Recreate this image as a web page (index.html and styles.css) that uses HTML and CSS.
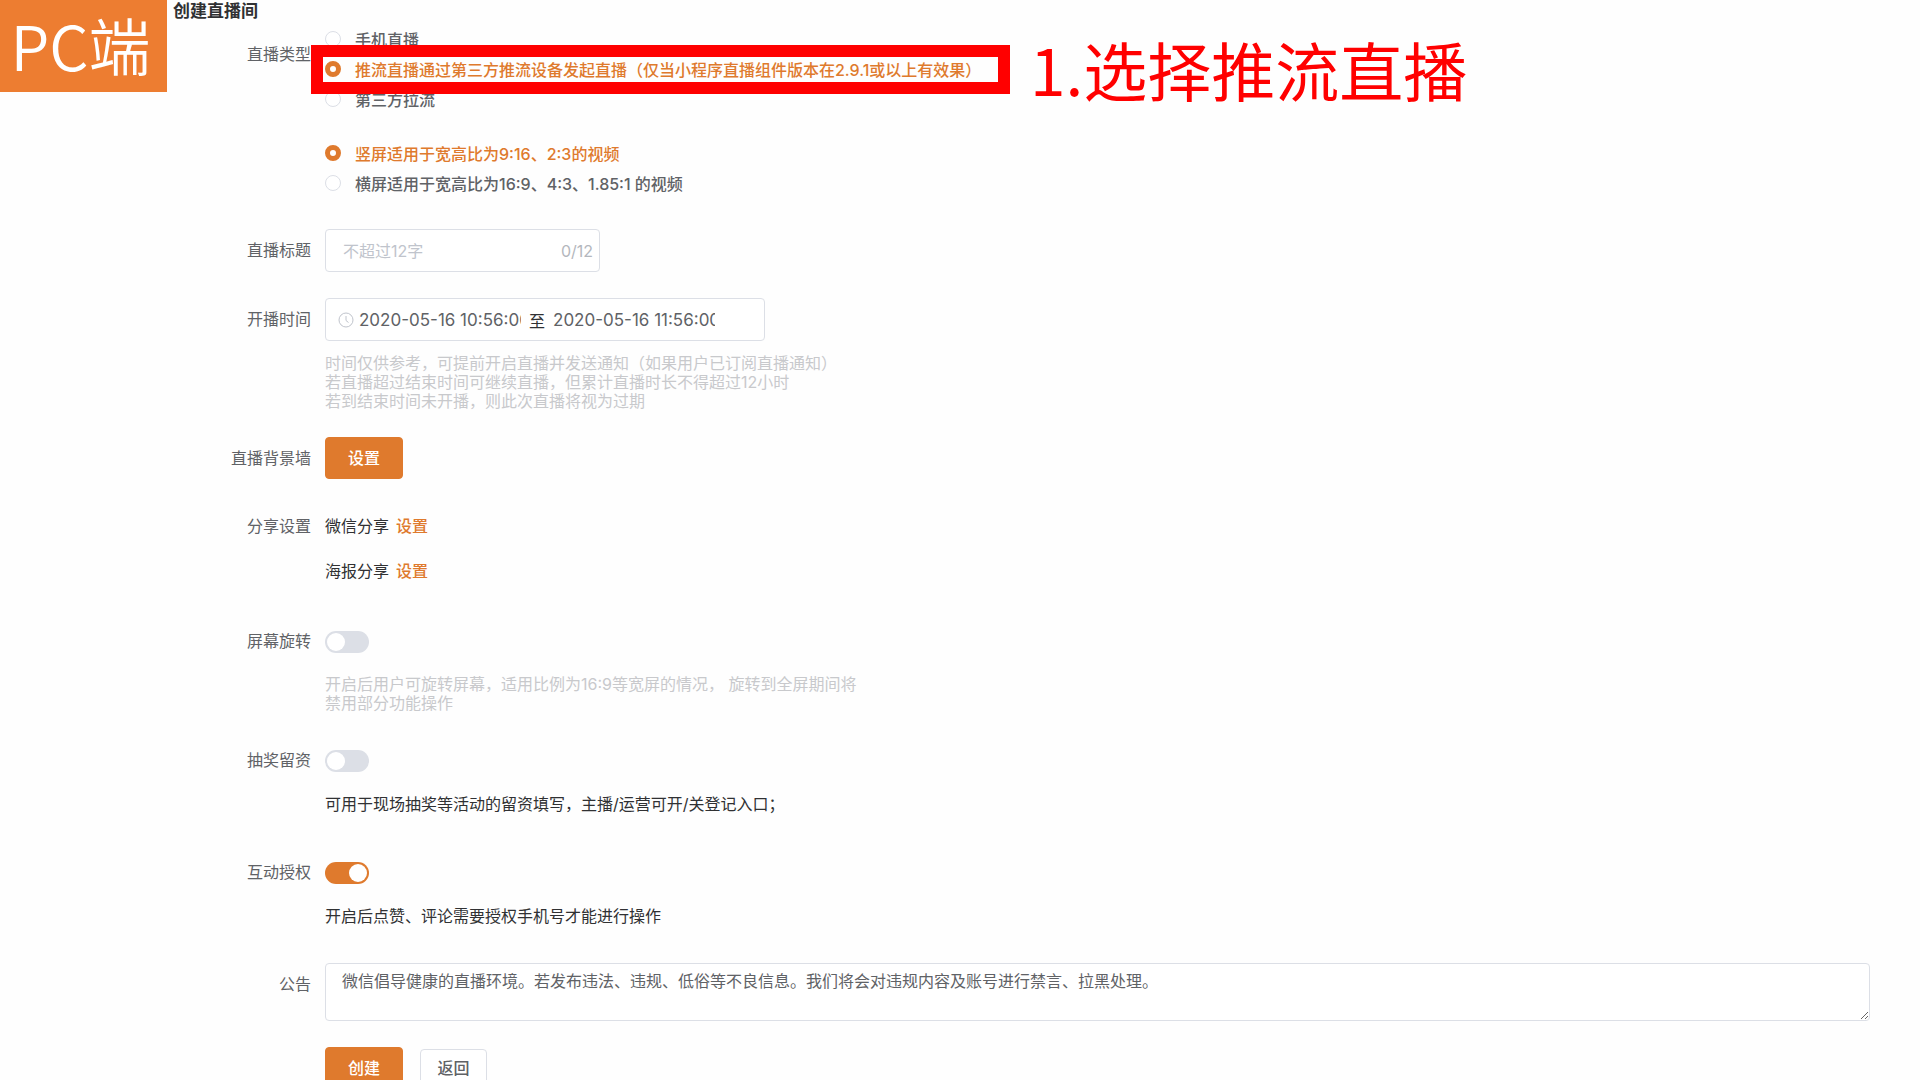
FILE: index.html
```
<!DOCTYPE html>
<html lang="zh-CN">

<head>
	<meta charset="UTF-8" />
	<meta name="viewport" content="width=device-width, initial-scale=1.0" />
	<title>创建直播间</title>
	<link rel="stylesheet" href="styles.css">
</head>

<body>
	<div class="badge">PC端</div>
	<div class="note">1.选择推流直播</div>

	<h1 class="page-title">创建直播间</h1>

	<form class="form">
		<div class="item item-type">
			<span class="item-label" id="type-label">直播类型</span>
			<div class="item-content">
				<div class="radio-group" role="radiogroup" aria-labelledby="type-label">
					<label class="radio"><input type="radio" name="type">手机直播</label>
					<div class="marked">
						<label class="radio"><input type="radio" name="type" checked>推流直播通过第三方推流设备发起直播（仅当小程序直播组件版本在2.9.1或以上有效果）</label>
						<div class="mark-box"></div>
					</div>
					<label class="radio"><input type="radio" name="type">第三方拉流</label>
				</div>
				<div class="radio-group" role="radiogroup" aria-labelledby="type-label">
					<label class="radio"><input type="radio" name="screen" checked>竖屏适用于宽高比为9:16、2:3的视频</label>
					<label class="radio"><input type="radio" name="screen">横屏适用于宽高比为16:9、4:3、1.85:1 的视频</label>
				</div>
			</div>
		</div>

		<div class="item">
			<label class="item-label" for="title">直播标题</label>
			<div class="item-content">
				<div class="box title-box">
					<input type="text" id="title" class="plain-input" placeholder="不超过12字" maxlength="12">
					<span class="count">0/12</span>
				</div>
			</div>
		</div>

		<div class="item">
			<label class="item-label" for="start">开播时间</label>
			<div class="item-content">
				<div class="box time-box">
					<svg class="clock" viewBox="0 0 16 16" fill="none" stroke="currentColor">
						<circle cx="8" cy="8" r="7" />
						<path d="M8 4v4.500l2.500 2" />
					</svg>
					<input type="text" id="start" class="plain-input time-input" value="2020-05-16 10:56:00">
					<span class="to">至</span>
					<input type="text" class="plain-input time-input" value="2020-05-16 11:56:00" aria-label="结束时间">
				</div>
				<p class="hint">时间仅供参考，可提前开启直播并发送通知（如果用户已订阅直播通知）<br>若直播超过结束时间可继续直播，但累计直播时长不得超过12小时<br>若到结束时间未开播，则此次直播将视为过期</p>
			</div>
		</div>

		<div class="item">
			<span class="item-label">直播背景墙</span>
			<div class="item-content">
				<button type="button" class="btn btn-primary">设置</button>
			</div>
		</div>

		<div class="item">
			<span class="item-label">分享设置</span>
			<div class="item-content share">
				<div class="share-row"><span>微信分享</span><a href="#">设置</a></div>
				<div class="share-row"><span>海报分享</span><a href="#">设置</a></div>
			</div>
		</div>

		<div class="item">
			<label class="item-label" for="rotate">屏幕旋转</label>
			<div class="item-content">
				<div class="switch-row"><input type="checkbox" id="rotate" class="switch"></div>
				<p class="hint">开启后用户可旋转屏幕，适用比例为16:9等宽屏的情况， 旋转到全屏期间将<br>禁用部分功能操作</p>
			</div>
		</div>

		<div class="item">
			<label class="item-label" for="lottery">抽奖留资</label>
			<div class="item-content">
				<div class="switch-row"><input type="checkbox" id="lottery" class="switch"></div>
				<p class="desc">可用于现场抽奖等活动的留资填写，主播/运营可开/关登记入口；</p>
			</div>
		</div>

		<div class="item">
			<label class="item-label" for="auth">互动授权</label>
			<div class="item-content">
				<div class="switch-row"><input type="checkbox" id="auth" class="switch" checked></div>
				<p class="desc">开启后点赞、评论需要授权手机号才能进行操作</p>
			</div>
		</div>

		<div class="item">
			<label class="item-label" for="notice">公告</label>
			<div class="item-content">
				<textarea id="notice" class="notice">微信倡导健康的直播环境。若发布违法、违规、低俗等不良信息。我们将会对违规内容及账号进行禁言、拉黑处理。</textarea>
			</div>
		</div>

		<div class="item">
			<span></span>
			<div class="item-content actions">
				<button type="submit" class="btn btn-primary">创建</button>
				<button type="button" class="btn btn-back">返回</button>
			</div>
		</div>
	</form>
</body>

</html>
```
FILE: styles.css
```
* {
	box-sizing: border-box;
}

body {
	margin: 0;
	height: 100vh;
	overflow: hidden;
	background-color: #fefefe;
	color: #303133;
	font-family: Inter, "Noto Sans CJK SC", sans-serif;
	font-size: 16px;
}

input,
textarea,
button {
	font-family: Inter, "Noto Sans CJK SC", sans-serif;
	font-size: 16px;
}

p {
	margin: 0;
}

.badge {
	position: absolute;
	top: 0;
	left: 0;
	width: 167px;
	height: 92px;
	padding-right: 6px;
	background-color: #ed7d31;
	color: #fff;
	font-family: "Noto Sans CJK SC", sans-serif;
	font-size: 62px;
	font-weight: 350;
	line-height: 88px;
	text-align: center;
}

.note {
	position: absolute;
	top: 22px;
	left: 1030px;
	color: #f00;
	font-family: "Noto Sans CJK SC", sans-serif;
	font-size: 64px;
	font-weight: 400;
	line-height: 92px;
	white-space: nowrap;
}

.page-title {
	margin: 0 0 2px 173px;
	font-size: 17px;
	font-weight: bold;
	line-height: 22px;
}

.form {
	display: flex;
	flex-direction: column;
	gap: 26px;
	padding-right: 50px;
}

.item {
	display: grid;
	grid-template-columns: 311px 1fr;
	column-gap: 14px;
	align-items: start;
}

.item-label {
	color: #606266;
	line-height: 42px;
	text-align: right;
}

/* radios */
.item-type {
	padding-bottom: 5px;
}

.item-type .item-label {
	padding-top: 9px;
}

.item-type .item-content {
	display: flex;
	flex-direction: column;
	gap: 24px;
}

.radio-group {
	display: flex;
	flex-direction: column;
	align-items: flex-start;
}

.radio {
	display: flex;
	align-items: center;
	gap: 14px;
	height: 30px;
	color: #606266;
	font-weight: 500;
	white-space: nowrap;
}

.radio input {
	appearance: none;
	width: 16px;
	height: 16px;
	margin: 0;
	border: 1px solid #dcdfe6;
	border-radius: 50%;
	background-color: #fff;
}

.radio input:checked {
	border: 5px solid #df7a2d;
}

.radio:has(input:checked) {
	color: #df7a2d;
}

.marked {
	position: relative;
}

.mark-box {
	position: absolute;
	top: -9px;
	left: -14px;
	width: 699px;
	height: 49px;
	border: 12px solid #f00;
	pointer-events: none;
	z-index: 1;
}

/* inputs */
.box {
	display: flex;
	align-items: center;
	height: 43px;
	border: 1px solid #dcdfe6;
	border-radius: 4px;
	background-color: #fff;
}

.title-box {
	width: 275px;
	padding: 0 6px 0 17px;
}

.time-box {
	width: 440px;
	padding-left: 12px;
}

.plain-input {
	flex: 1;
	min-width: 0;
	padding: 0;
	border: none;
	outline: none;
	background: none;
	color: #606266;
}

.plain-input::placeholder {
	color: #c0c4cc;
}

.count {
	color: #b4b7bd;
}

.time-input {
	flex: none;
	width: 162px;
	font-size: 17px;
}

.clock {
	width: 16px;
	height: 16px;
	margin-right: 5px;
	color: #c0c4cc;
}

.to {
	margin: 0 8px;
}

.hint {
	margin-top: 13px;
	color: #c8c9cc;
	line-height: 19px;
}

.desc {
	margin-top: 2px;
	line-height: 42px;
}

.btn {
	border: 1px solid #dcdfe6;
	border-radius: 4px;
	padding: 0 0 2px;
	background-color: #fff;
	color: #606266;
	font-weight: 500;
}

.btn-primary {
	display: block;
	width: 78px;
	height: 42px;
	border-color: #df7a2d;
	background-color: #df7a2d;
	color: #fff;
}

.btn-back {
	width: 67px;
	height: 38px;
}

.share {
	display: grid;
	gap: 3px;
	padding-bottom: 2px;
	line-height: 42px;
}

.share-row {
	display: flex;
	gap: 7px;
}

.share-row a {
	color: #df7a2d;
	font-weight: 500;
	text-decoration: none;
}

/* switches */
.switch-row {
	display: flex;
	align-items: center;
	height: 42px;
	padding-top: 2px;
}

.switch {
	appearance: none;
	display: flex;
	width: 44px;
	height: 22px;
	margin: 0;
	padding: 2px;
	border-radius: 11px;
	background-color: #dcdfe6;
}

.switch::before {
	content: "";
	width: 18px;
	height: 18px;
	border-radius: 50%;
	background-color: #fff;
}

.switch:checked {
	justify-content: flex-end;
	background-color: #df7a2d;
}

.notice {
	display: block;
	width: 100%;
	height: 58px;
	padding: 5px 16px;
	border: 1px solid #dcdfe6;
	border-radius: 4px;
	background-color: #fff;
	color: #606266;
	line-height: 24px;
	resize: vertical;
}

.actions {
	display: flex;
	align-items: center;
	gap: 17px;
}
```
